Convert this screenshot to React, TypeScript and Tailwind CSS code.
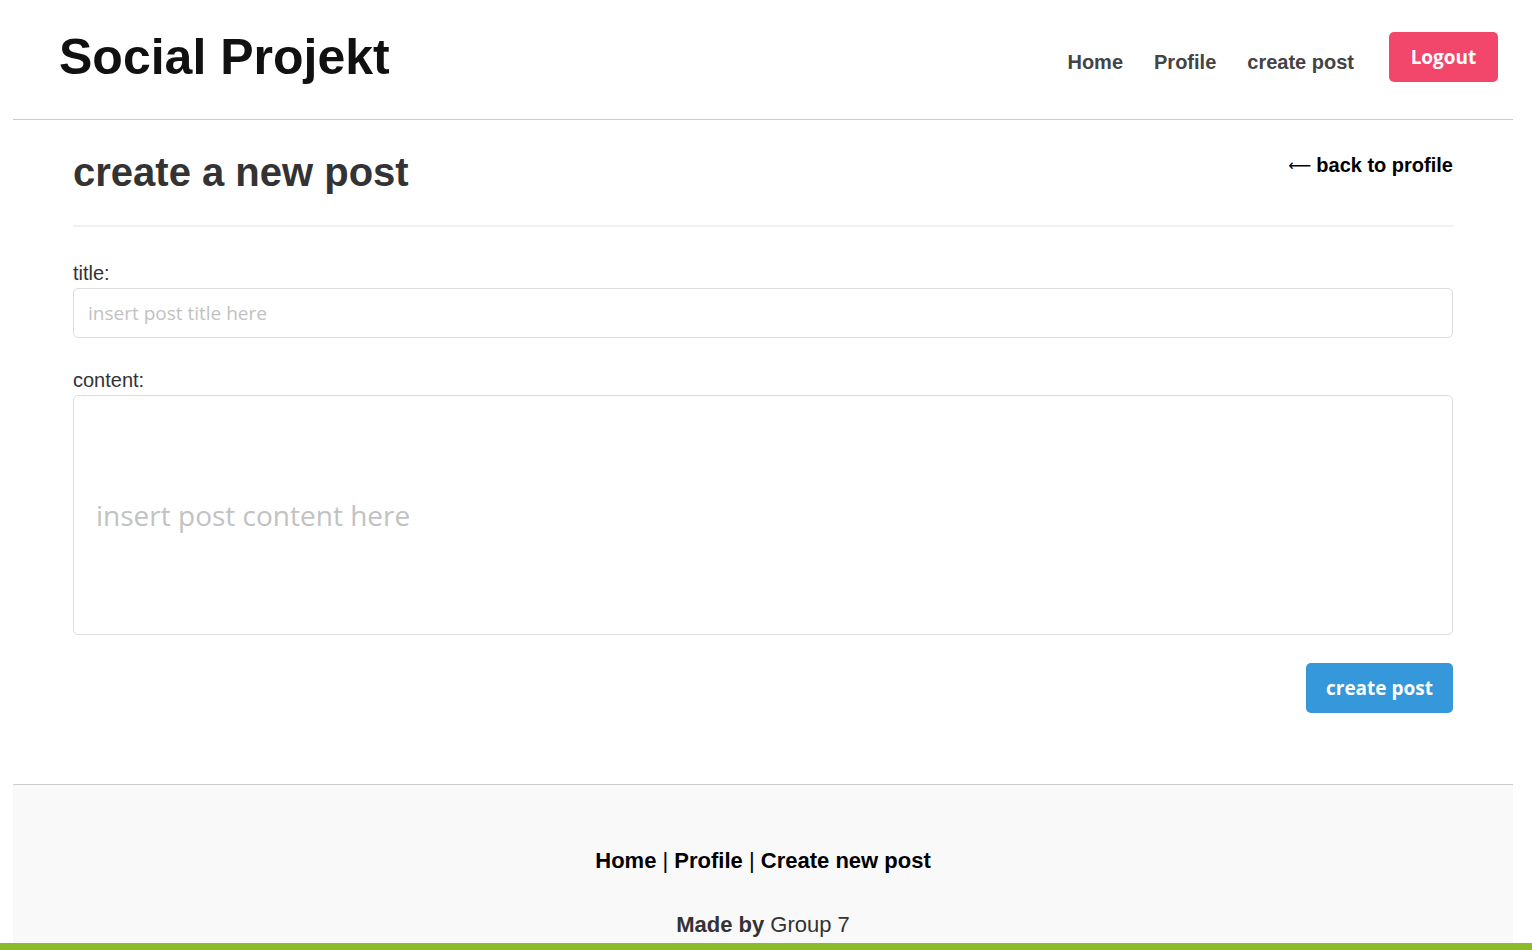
export default function App() {
  return (
    <div className="min-h-screen bg-white font-['Liberation_Sans',Arial,sans-serif]">
      <div className="ml-[13px] mr-[19px]">
        <header className="h-[120px] border-b border-[#ccc] flex items-start justify-between pl-[46px] pr-[15px]">
          <h1 className="mt-[32px] text-[50px] leading-none font-bold text-[#111]">
            Social Projekt
          </h1>
          <nav className="flex items-start">
            <a className="mt-[52px] text-[20px] leading-none font-bold text-[#444]">Home</a>
            <a className="mt-[52px] ml-[31px] text-[20px] leading-none font-bold text-[#444]">Profile</a>
            <a className="mt-[52px] ml-[31px] text-[20px] leading-none font-bold text-[#444]">create post</a>
            <button className="mt-[32px] ml-[35px] w-[109px] h-[50px] rounded-[5px] bg-[#f2466a] text-white text-[19px] font-bold font-['Open_Sans',sans-serif]">
              Logout
            </button>
          </nav>
        </header>

        <main className="px-[60px] flex flex-col">
          <div className="flex items-start justify-between">
            <h2 className="mt-[32px] text-[40px] leading-none font-bold text-[#333]">
              create a new post
            </h2>
            <a className="mt-[35px] flex items-center text-[20px] leading-none font-bold text-black">
              <span className="font-normal font-['DejaVu_Sans',sans-serif] text-[16px] mr-[5px] mt-[2px]">⟵</span>
              back to profile
            </a>
          </div>
          <div className="mt-[33px] h-[2px] bg-[#f1f1f1]" />

          <label className="mt-[36px] text-[20px] leading-none text-[#333]">title:</label>
          <input
            className="mt-[5px] h-[50px] w-full rounded-[5px] border border-[#ddd] px-[14px] text-[19px] font-['Open_Sans',sans-serif] placeholder:text-[#c2c2c2] outline-none"
            placeholder="insert post title here"
          />

          <label className="mt-[32px] text-[20px] leading-none text-[#333]">content:</label>
          <input
            className="mt-[5px] h-[240px] w-full rounded-[5px] border border-[#ddd] px-[22px] text-[28px] font-['Open_Sans',sans-serif] placeholder:text-[#c2c2c2] outline-none"
            placeholder="insert post content here"
          />

          <div className="mt-[28px] mb-[71px] flex justify-end">
            <button className="h-[50px] w-[147px] rounded-[5px] bg-[#3498db] text-white text-[19px] font-bold font-['Open_Sans',sans-serif]">
              create post
            </button>
          </div>
        </main>

        <footer className="h-[159px] border-t border-[#ccc] bg-[#f9f9f9] flex flex-col items-center">
          <div className="mt-[65px] text-[22px] leading-none text-black">
            <a className="font-bold">Home</a> | <a className="font-bold">Profile</a> |{" "}
            <a className="font-bold">Create new post</a>
          </div>
          <p className="mt-[42px] text-[22px] leading-none text-[#333]">
            <span className="font-bold">Made by</span> Group 7
          </p>
        </footer>
      </div>
      <div className="h-[7px] bg-[#8bbb2b]" />
    </div>
  );
}
